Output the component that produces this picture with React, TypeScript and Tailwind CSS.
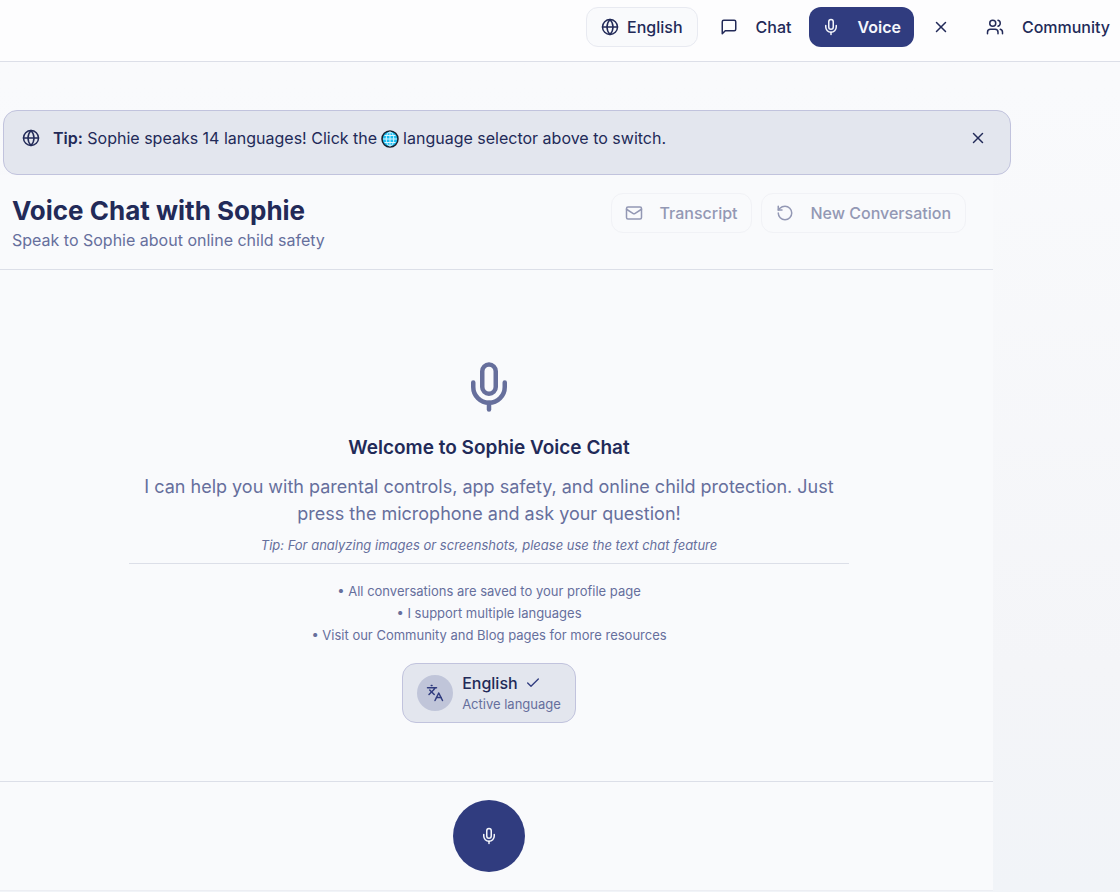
import { Check, Globe, Languages, Mail, Mic, RotateCcw, Users, X } from "lucide-react"

const NOTES = [
  "All conversations are saved to your profile page",
  "I support multiple languages",
  "Visit our Community and Blog pages for more resources",
]

function ChatIcon() {
  return (
    <svg
      viewBox="0 0 24 24"
      className="size-[18px]"
      fill="none"
      stroke="currentColor"
      strokeWidth="2"
      strokeLinecap="round"
      strokeLinejoin="round"
      aria-hidden="true"
    >
      <path d="M21 15a2 2 0 0 1-2 2H7l-4 4V5a2 2 0 0 1 2-2h14a2 2 0 0 1 2 2z" />
    </svg>
  )
}

function GlobeEmoji() {
  return (
    <svg viewBox="0 0 18 18" className="mx-1 inline-block size-[18px] align-[-4px]" role="img" aria-label="globe">
      <circle cx="9" cy="9" r="8" fill="#19bdf0" stroke="#1a1f2b" strokeWidth="1.5" />
      <g fill="none" stroke="#d8f5ff" strokeWidth="1">
        <path d="M9 2v14M2 9h14M3.5 5.5h11M3.5 12.5h11" />
        <ellipse cx="9" cy="9" rx="3.8" ry="7" />
      </g>
    </svg>
  )
}

function TopNav() {
  return (
    <header className="flex h-[62px] items-start justify-end border-b border-[#dcdfe8] bg-[#fdfdfe] pt-[7px] pr-[10px] text-base font-medium">
      <nav className="flex items-center">
        <button
          type="button"
          className="flex h-10 items-center gap-2 rounded-xl border border-[#e8eaf1] bg-[#f9fafc] px-[14px]"
        >
          <Globe className="size-[18px]" />
          English
        </button>
        <a href="#chat" className="flex h-10 items-center gap-[18px] pr-[18px] pl-[22px]">
          <ChatIcon />
          Chat
        </a>
        <a
          href="#voice"
          aria-current="page"
          className="flex h-10 items-center gap-[17px] rounded-xl bg-[#303c7f] px-[13px] font-semibold text-[#f5f7fc]"
        >
          <Mic className="size-[18px]" />
          Voice
        </a>
        <button type="button" aria-label="Close voice chat" className="flex h-10 items-center px-[18px]">
          <X className="size-[18px]" />
        </button>
        <a href="#community" className="flex h-10 items-center gap-[18px] pl-[18px]">
          <Users className="size-[18px]" />
          Community
        </a>
      </nav>
    </header>
  )
}

function TipBanner() {
  return (
    <div className="mt-12 mr-[109px] ml-[3px] flex h-[65px] items-start rounded-[14px] border border-[#c1c3dd] bg-[#e3e6ee] px-[18px] pt-[18px]">
      <Globe className="size-[18px] shrink-0" />
      <p className="-mt-1 ml-[13px] grow text-base leading-[26px]">
        <strong className="font-semibold">Tip:</strong> Sophie speaks 14 languages! Click the
        <GlobeEmoji />
        language selector above to switch.
      </p>
      <button type="button" aria-label="Dismiss tip" className="mr-[5px]">
        <X className="size-[18px]" />
      </button>
    </div>
  )
}

function PanelHeader() {
  return (
    <div className="flex items-start justify-between border-b border-[#dcdfe8] pt-[18px] pr-[27px] pb-[18px] pl-3">
      <div>
        <h1 className="text-[26px] leading-9 font-bold">Voice Chat with Sophie</h1>
        <p className="text-base leading-[22px] text-[#666f9c]">Speak to Sophie about online child safety</p>
      </div>
      <div className="flex gap-[9px] text-base font-medium text-[#9398b4]">
        <button
          type="button"
          disabled
          className="flex h-10 items-center gap-[17px] rounded-xl border border-[#f1f2f6] px-[13px]"
        >
          <Mail className="size-[18px]" />
          Transcript
        </button>
        <button
          type="button"
          disabled
          className="flex h-10 items-center gap-[17px] rounded-xl border border-[#f1f2f6] px-[14px]"
        >
          <RotateCcw className="size-[18px]" />
          New Conversation
        </button>
      </div>
    </div>
  )
}

function Welcome() {
  return (
    <section className="flex flex-col items-center pt-[90px] pr-[15px] pb-[58px] text-center text-[#666f9c]">
      <Mic className="size-[54px]" />
      <h2 className="mt-5 text-[19px] leading-7 font-semibold text-[#222a58]">Welcome to Sophie Voice Chat</h2>
      <p className="mt-[11px] max-w-[720px] text-lg leading-[27px]">
        I can help you with parental controls, app safety, and online child protection. Just press the microphone and
        ask your question!
      </p>
      <p className="mt-2 text-[13px] leading-5 italic">
        Tip: For analyzing images or screenshots, please use the text chat feature
      </p>
      <ul className="mt-2 w-full max-w-[720px] border-t border-[#dcdfe8] pt-4 text-[13px] leading-[22px]">
        {NOTES.map((note) => (
          <li key={note}>• {note}</li>
        ))}
      </ul>
      <button
        type="button"
        className="mt-[17px] flex h-[60px] items-center gap-[9px] rounded-[14px] border border-[#c1c3dd] bg-[#e3e6ee] px-[14px] text-left"
      >
        <span className="flex size-9 items-center justify-center rounded-full bg-[#c0c5d9] text-[#303c7f]">
          <Languages className="size-[18px]" />
        </span>
        <span>
          <span className="flex items-center gap-[7px] text-base leading-[22px] font-medium text-[#222a58]">
            English
            <Check className="size-4 text-[#303c7f]" />
          </span>
          <span className="block text-[13px] leading-5">Active language</span>
        </span>
      </button>
    </section>
  )
}

export default function App() {
  return (
    <div className="min-h-screen overflow-hidden bg-linear-to-b from-[#f9fafc] from-10% via-[#f4f5f8] via-75% to-[#f1f4f8] font-['Inter','Liberation_Sans',sans-serif] text-[#222a58]">
      <TopNav />
      <main>
        <TipBanner />
        <div className="mr-[127px] border-b border-[#eceef3] bg-[#f9fafc]">
          <PanelHeader />
          <Welcome />
          <div className="flex justify-center border-t border-[#dcdfe8] pt-[18px] pr-[15px] pb-[18px]">
            <button
              type="button"
              aria-label="Start talking"
              className="flex size-[72px] items-center justify-center rounded-full bg-[#303c7f] text-[#f5f7fc]"
            >
              <Mic className="size-[18px]" />
            </button>
          </div>
        </div>
      </main>
    </div>
  )
}
